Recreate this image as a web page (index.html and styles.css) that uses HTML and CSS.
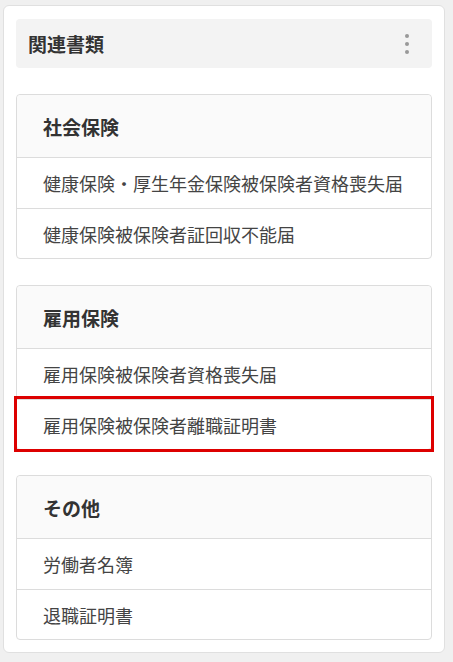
FILE: index.html
```html
<!DOCTYPE html>
<html lang="ja">
<head>
  <meta charset="UTF-8" />
  <meta name="viewport" content="width=device-width, initial-scale=1.0"/>
  <title>関連書類</title>
  <link rel="stylesheet" href="styles.css">
</head>
<body>

  <div class="card">
    <div class="card-header">
      <h2>関連書類</h2>
      <button class="kebab" aria-label="メニュー">
        <span></span><span></span><span></span>
      </button>
    </div>

    <!-- 社会保険 -->
    <div class="doc-group">
      <div class="group-title">社会保険</div>
      <a class="doc-item" href="#">健康保険・厚生年金保険被保険者資格喪失届</a>
      <a class="doc-item" href="#">健康保険被保険者証回収不能届</a>
    </div>

    <!-- 雇用保険 -->
    <div class="doc-group">
      <div class="group-title">雇用保険</div>
      <a class="doc-item" href="#">雇用保険被保険者資格喪失届</a>
      <a class="doc-item highlight" href="#">雇用保険被保険者離職証明書</a>
    </div>

    <!-- その他 -->
    <div class="doc-group">
      <div class="group-title">その他</div>
      <a class="doc-item" href="#">労働者名簿</a>
      <a class="doc-item" href="#">退職証明書</a>
    </div>
  </div>

</body>
</html>
```

FILE: styles.css
```css
body {
  margin: 0;
  padding: 5px 8px 9px 3px;
  background: #f0f0f0;
  font-family: "Noto Sans CJK JP", "Noto Sans", sans-serif;
  color: #333;
}

.card {
  width: 442px;
  box-sizing: border-box;
  background: white;
  border: 1px solid #e0e0e0;
  border-radius: 6px;
  padding: 13px 12px 12px 12px;
}

.card-header {
  display: flex;
  align-items: center;
  justify-content: space-between;
  height: 49px;
  background: #f3f3f3;
  border-radius: 4px;
  padding: 0 23px 0 12px;
}

.card-header h2 {
  margin: 0;
  font-size: 19px;
  font-weight: bold;
  color: #333;
}

.kebab {
  display: flex;
  flex-direction: column;
  gap: 4px;
  background: none;
  border: none;
  padding: 0;
  cursor: pointer;
}

.kebab span {
  width: 4px;
  height: 4px;
  border-radius: 50%;
  background: #999;
}

.doc-group {
  margin-top: 26px;
  border: 1px solid #dcdcdc;
  border-radius: 4px;
}

.doc-group:last-child {
  margin-top: 25px;
}

.group-title {
  display: flex;
  align-items: center;
  height: 63px;
  box-sizing: border-box;
  padding: 0 26px;
  background: #fafafa;
  border-bottom: 1px solid #dcdcdc;
  border-radius: 4px 4px 0 0;
  font-size: 19px;
  font-weight: bold;
  color: #333;
}

.doc-item {
  display: flex;
  align-items: center;
  height: 50px;
  box-sizing: border-box;
  padding: 0 26px;
  font-size: 18px;
  color: #444;
  text-decoration: none;
}

.doc-item + .doc-item {
  border-top: 1px solid #dcdcdc;
}

.doc-item.highlight {
  outline: 3px solid #dd0000;
  outline-offset: 0;
}
```
